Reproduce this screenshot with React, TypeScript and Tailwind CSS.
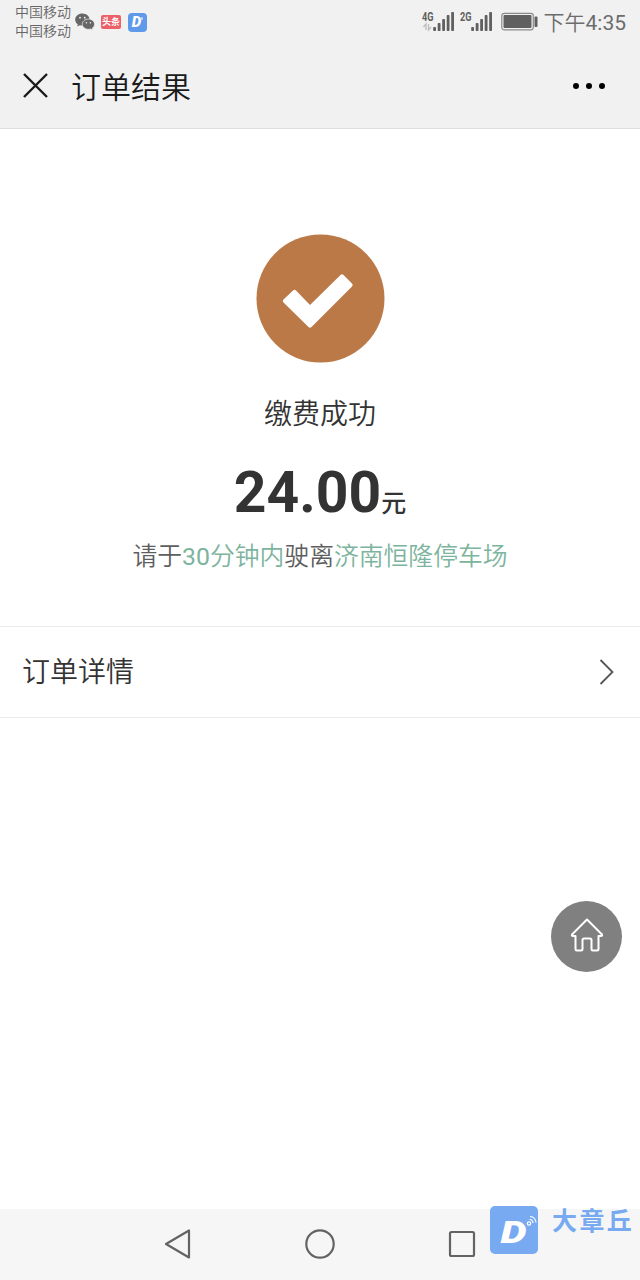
import React from "react";

const signalBars = [
  { x: 0, h: 4 },
  { x: 4.5, h: 8 },
  { x: 9, h: 12 },
  { x: 13.5, h: 16 },
  { x: 18, h: 19 },
];

export default function App() {
  return (
    <div
      className="relative flex h-[1280px] w-[640px] flex-col overflow-hidden bg-white text-[#333333]"
      style={{ fontFamily: "Roboto, 'Noto Sans CJK SC', sans-serif" }}
    >
      <header className="h-[129px] shrink-0 border-b border-[#dedede] bg-[#f1f1f1]">
        <StatusBar />
        <TitleBar />
      </header>

      <main className="flex grow flex-col">
        <PaymentResult />
        <button className="flex h-[92px] items-center justify-between border-y border-[#ebebeb] pr-[25px] pl-[22px] text-[28px] font-[350]">
          <span className="pt-[2px]">订单详情</span>
          <svg width="16" height="26" viewBox="0 0 16 26" fill="none" stroke="#555555" strokeWidth="1.8">
            <path d="M1.5 1 13.5 13 1.5 25" />
          </svg>
        </button>
      </main>

      <NavigationBar />
      <HomeButton />
      <Watermark />
    </div>
  );
}

function StatusBar() {
  return (
    <div className="flex h-11 items-center justify-between pr-[14px] pl-[15px] text-[#666666]">
      <div className="flex items-center">
        <div className="w-[60px] text-[14px] leading-[19px] font-[350] text-[#666666]">
          <div>中国移动</div>
          <div>中国移动</div>
        </div>
        <WechatIcon />
        <div className="ml-[6px] flex h-[14px] w-5 items-center justify-center rounded-[2px] bg-[#ec6068] text-[9px] leading-none font-bold text-white">
          头条
        </div>
        <div className="ml-[7px] flex h-[19px] w-[19px] items-center justify-center rounded-[4px] bg-[#5f9aea] text-[15px] leading-none font-black text-white italic">
          D
          <span className="mb-[7px] h-[3px] w-[2px] rounded-full bg-white/60" />
        </div>
      </div>

      <div className="flex items-center">
        <Signal label="4G" data />
        <div className="w-[5px]" />
        <Signal label="2G" />
        <svg className="ml-[8px]" width="37" height="20" viewBox="0 0 37 20">
          <rect x="0.8" y="1.3" width="31.5" height="16.5" rx="2.5" fill="none" stroke="#8a8a8a" strokeWidth="1.2" />
          <rect x="2.5" y="3" width="28" height="13" rx="1" fill="#606060" />
          <rect x="33.5" y="4.5" width="3" height="10.5" rx="1" fill="#606060" />
        </svg>
        <span className="ml-[6px] pt-[2px] text-[21px] leading-none text-[#6c6c6c]">
          <span className="font-[350]">下午</span>4:35
        </span>
      </div>
    </div>
  );
}

function Signal({ label, data }: { label: string; data?: boolean }) {
  return (
    <svg width="33" height="22" viewBox="0 0 33 22">
      <text x="0" y="9.5" fontSize="12" fontWeight="700" fill="#606060" textLength="11.5" lengthAdjust="spacingAndGlyphs">
        {label}
      </text>
      {data && (
        <path d="M1.5 16 4 13v6M6.5 13v6l2.5-3" fill="none" stroke="#bcbcbc" strokeWidth="1.3" />
      )}
      {signalBars.map((bar) => (
        <rect key={bar.x} x={bar.x + 11.2} y={20 - bar.h} width="2.8" height={bar.h} rx="0.8" fill="#606060" />
      ))}
    </svg>
  );
}

function WechatIcon() {
  return (
    <svg width="20" height="18" viewBox="0 0 20 18" fill="#666666">
      <path d="M7.4.6C3.4.6.2 3.3.2 6.7c0 1.9 1 3.5 2.6 4.6l-.6 2.2 2.6-1.3c.9.3 1.7.4 2.6.4 4 0 7.2-2.6 7.2-5.9S11.4.6 7.4.6Z" />
      <path
        d="M13.4 6.1c-3.4 0-6.1 2.3-6.1 5.1s2.7 5.1 6.1 5.1c.8 0 1.5-.1 2.1-.3l2.3 1.2-.6-1.9c1.4-1 2.3-2.4 2.3-4.1 0-2.8-2.7-5.1-6.1-5.1Z"
        stroke="#f1f1f1"
        strokeWidth="0.7"
      />
      <g fill="#f1f1f1">
        <circle cx="5" cy="4.7" r="0.9" />
        <circle cx="9.7" cy="4.7" r="0.9" />
        <circle cx="11.4" cy="9.7" r="0.8" />
        <circle cx="15.4" cy="9.7" r="0.8" />
      </g>
    </svg>
  );
}

function TitleBar() {
  return (
    <div className="flex h-[84px] items-center pr-[35px] pl-[23px] text-[#1a1a1a]">
      <svg className="mb-[2px]" width="25" height="25" viewBox="0 0 25 25" fill="none" stroke="currentColor" strokeWidth="2.4">
        <path d="m1 1 23 23M24 1 1 24" />
      </svg>
      <h1 className="ml-[23px] pt-[3px] text-[30px] leading-10 font-[350]">订单结果</h1>
      <div className="ml-auto flex gap-[7px]">
        <span className="h-[6px] w-[6px] rounded-full bg-black" />
        <span className="h-[6px] w-[6px] rounded-full bg-black" />
        <span className="h-[6px] w-[6px] rounded-full bg-black" />
      </div>
    </div>
  );
}

function PaymentResult() {
  return (
    <section className="flex h-[497px] flex-col items-center pt-[105px]">
      <svg width="129" height="129" viewBox="0 0 129 129">
        <circle cx="64.5" cy="64.5" r="64" fill="#bb7947" />
        <path
          d="M27.5 65.5 37 56.5Q38.5 55 40 56.5L54 71 84.5 41Q86 39.5 87.5 41L96 49.5Q97.5 51 96 52.5L55.5 93Q54 94.5 52.5 93L27.5 68.5Q26 67 27.5 65.5Z"
          fill="#ffffff"
        />
      </svg>
      <p className="mt-[31px] text-[28px] leading-[42px] font-[350]">缴费成功</p>
      <p className="mt-[22px] flex items-baseline leading-[70px] font-bold">
        <span className="text-[57px]">24.00</span>
        <span className="text-[25px] font-medium">元</span>
      </p>
      <p className="text-[24.8px] leading-9 font-[350] text-[#5e5e5e]">
        请于
        <span className="text-[#7db49d]">
          <span className="font-normal">30</span>分钟内
        </span>
        驶离
        <span className="text-[#7db49d]">济南恒隆停车场</span>
      </p>
    </section>
  );
}

function NavigationBar() {
  return (
    <nav className="flex h-[71px] shrink-0 items-center justify-between bg-[#f6f6f6] px-[163px] pb-px">
      <svg width="30" height="30" viewBox="0 0 30 30" fill="none" stroke="#636363" strokeWidth="2.2" strokeLinejoin="round">
        <path d="M3 15 26 1.5v27Z" />
      </svg>
      <svg width="30" height="30" viewBox="0 0 30 30" fill="none" stroke="#636363" strokeWidth="2.2">
        <circle cx="15" cy="15" r="13.7" />
      </svg>
      <svg width="30" height="30" viewBox="0 0 30 30" fill="none" stroke="#636363" strokeWidth="2.2">
        <rect x="3" y="3" width="24" height="24" rx="1.5" />
      </svg>
    </nav>
  );
}

// Floating shortcut above the page content
function HomeButton() {
  return (
    <button className="absolute top-[901px] right-[18px] flex h-[71px] w-[71px] items-center justify-center rounded-full bg-[#808080] pb-[3px]">
      <svg width="34" height="34" viewBox="0 0 34 34" fill="none" stroke="#ffffff" strokeWidth="2" strokeLinejoin="round">
        <path d="M17 1.5 32 16.5Q32.5 18 31 18H28.5V31Q28.5 32.5 27 32.5H23Q21.5 32.5 21.5 31V22Q21.5 20.5 20 20.5H14Q12.5 20.5 12.5 22V31Q12.5 32.5 11 32.5H7Q5.5 32.5 5.5 31V18H3Q1.5 18 2 16.5Z" />
      </svg>
    </button>
  );
}

function Watermark() {
  return (
    <div className="absolute top-[1206px] left-[490px] flex">
      <svg width="48" height="48" viewBox="0 0 48 48">
        <rect width="48" height="48" rx="5" fill="#78aaf1" />
        <text x="10.5" y="36.5" fontSize="32" fontWeight="900" fontStyle="italic" fill="#ffffff" textLength="26" lengthAdjust="spacingAndGlyphs">
          D
        </text>
        <circle cx="39" cy="17.5" r="1.7" fill="none" stroke="#ffffff" strokeWidth="1.2" />
        <path d="M39.5 13.5q3.3.2 3.5 3.5M40 10.5q5.5.5 6 6" fill="none" stroke="#ffffff" strokeWidth="1.2" />
      </svg>
      <div className="ml-[14px] text-[25px] leading-[32px] font-bold tracking-[2.4px] text-[#78aaf1]">大章丘</div>
    </div>
  );
}
